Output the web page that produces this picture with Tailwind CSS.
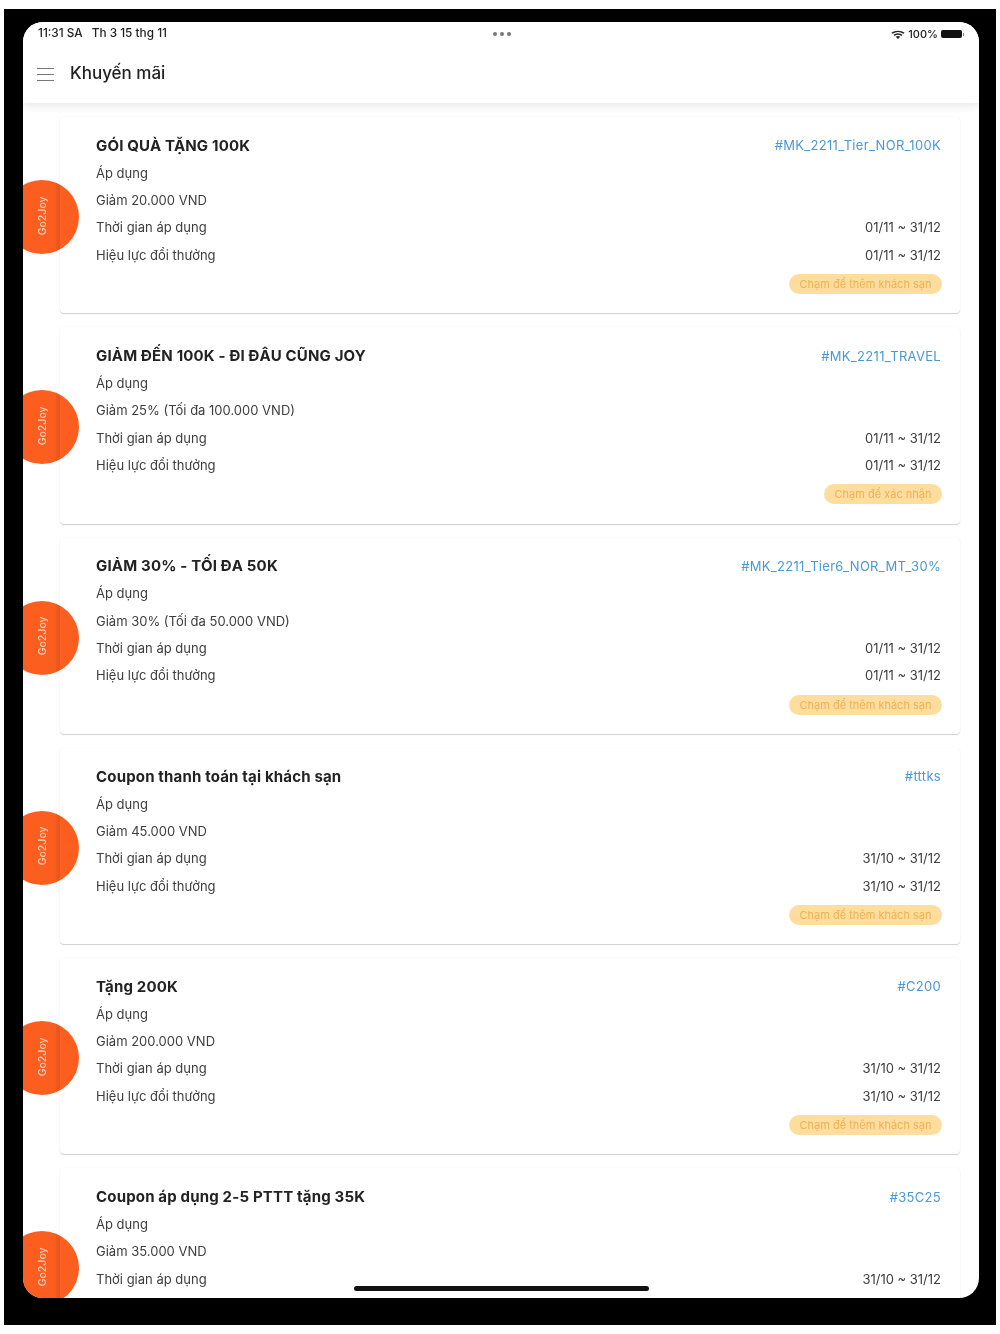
<!DOCTYPE html>
<html lang="vi">
<head>
  <meta charset="UTF-8" />
  <meta name="viewport" content="width=device-width, initial-scale=1.0"/>
  <title>Khuyến mãi</title>
  <script src="https://cdn.jsdelivr.net/npm/@tailwindcss/browser@4"></script>
</head>
<body class="bg-white font-['Inter','Noto_Sans',sans-serif] text-[#333]">
  <div class="w-[1000px] h-[1334px] pt-[9px] pl-1 overflow-hidden blur-[0.4px]">
    <div class="w-[992px] h-[1316px] bg-black pt-[13px] pl-[19px]">
      <div class="relative w-[956px] h-[1276px] bg-white rounded-[20px] overflow-hidden flex flex-col">

        <header class="relative z-20 h-[81px] shrink-0 bg-white shadow-[0_3px_8px_rgba(0,0,0,0.09)]">
          <div class="h-[22px] pt-[2px] px-[15px] flex items-center justify-between text-[11px] font-medium text-[#222]">
            <div class="flex gap-[9px] w-[200px] text-[11.8px]"><span>11:31 SA</span><span>Th 3 15 thg 11</span></div>
            <div class="flex gap-[3px] mr-[-2px]">
              <span class="w-1 h-1 rounded-full bg-[#777]"></span>
              <span class="w-1 h-1 rounded-full bg-[#777]"></span>
              <span class="w-1 h-1 rounded-full bg-[#777]"></span>
            </div>
            <div class="flex items-center justify-end gap-[3px] w-[200px]">
              <svg width="14" height="9" viewBox="0 0 14 11" preserveAspectRatio="none" fill="#222"><path d="M7 11 4.8 8.4a3.4 3.4 0 0 1 4.4 0zM3.7 7.2 2.5 5.8a7 7 0 0 1 9 0l-1.2 1.4a5.2 5.2 0 0 0-6.6 0zM1.5 4.7.3 3.3a10.4 10.4 0 0 1 13.4 0l-1.2 1.4a8.6 8.6 0 0 0-11 0z"/></svg>
              <span>100%</span>
              <span class="w-[21px] h-2 rounded-[2px] bg-[#111]"></span>
              <span class="w-px h-[3px] -ml-[2px] bg-[#888]"></span>
            </div>
          </div>
          <div class="flex items-center gap-4 pl-[14px] h-[59px] pt-[1px]">
            <div class="w-[17px] flex flex-col gap-[5px]">
              <span class="h-px bg-[#777]"></span>
              <span class="h-px bg-[#777]"></span>
              <span class="h-px bg-[#777]"></span>
            </div>
            <h1 class="text-[17px] font-medium text-[#222]">Khuyến mãi</h1>
          </div>
        </header>

        <main class="flex-1 min-h-0 overflow-hidden pt-[14px] flex flex-col gap-[14px]">

          <article class="relative shrink-0 ml-[37px] mr-[19px] h-[196.25px] bg-white rounded shadow-[0_1px_1px_rgba(0,0,0,0.18),0_0_2px_rgba(0,0,0,0.05)] pl-[36px] pr-[19px] pt-[15px] text-[13px] text-[#3d3d3d]">
            <div class="absolute -left-[55px] top-[63px] w-[74px] h-[74px] rounded-full bg-[linear-gradient(90deg,#fb5e1e_68%,#e8591f_70%,#e2571f_74.3%,#fb5e1e_74.3%)] flex items-center justify-center">
              <span class="-rotate-90 mb-[3px] ml-[1px] text-[10.5px] font-medium text-white/70">Go2Joy</span>
            </div>
            <div class="flex justify-between items-center h-[28px]"><h2 class="text-[15px] tracking-[0.17px] font-bold text-[#222]">GÓI QUÀ TẶNG 100K</h2><span class="text-[#4a98d8] tracking-[0.3px]">#MK_2211_Tier_NOR_100K</span></div>
            <div class="h-[27.3px] flex items-center">Áp dụng</div>
            <div class="h-[27.3px] flex items-center">Giảm 20.000 VND</div>
            <div class="h-[27.3px] flex items-center justify-between"><span>Thời gian áp dụng</span><span>01/11 ~ 31/12</span></div>
            <div class="h-[27.3px] flex items-center justify-between"><span>Hiệu lực đổi thưởng</span><span>01/11 ~ 31/12</span></div>
            <div class="flex justify-end mt-[5px] -mr-px"><span class="h-5 px-[10.5px] rounded-full bg-[#fedd9f] text-[11px] leading-5 text-[#eeb152]">Chạm để thêm khách sạn</span></div>
          </article>

          <article class="relative shrink-0 ml-[37px] mr-[19px] h-[196.25px] bg-white rounded shadow-[0_1px_1px_rgba(0,0,0,0.18),0_0_2px_rgba(0,0,0,0.05)] pl-[36px] pr-[19px] pt-[15px] text-[13px] text-[#3d3d3d]">
            <div class="absolute -left-[55px] top-[63px] w-[74px] h-[74px] rounded-full bg-[linear-gradient(90deg,#fb5e1e_68%,#e8591f_70%,#e2571f_74.3%,#fb5e1e_74.3%)] flex items-center justify-center">
              <span class="-rotate-90 mb-[3px] ml-[1px] text-[10.5px] font-medium text-white/70">Go2Joy</span>
            </div>
            <div class="flex justify-between items-center h-[28px]"><h2 class="text-[15px] tracking-[0.17px] font-bold text-[#222]">GIẢM ĐẾN 100K - ĐI ĐÂU CŨNG JOY</h2><span class="text-[#4a98d8] tracking-[0.3px]">#MK_2211_TRAVEL</span></div>
            <div class="h-[27.3px] flex items-center">Áp dụng</div>
            <div class="h-[27.3px] flex items-center">Giảm 25% (Tối đa 100.000 VND)</div>
            <div class="h-[27.3px] flex items-center justify-between"><span>Thời gian áp dụng</span><span>01/11 ~ 31/12</span></div>
            <div class="h-[27.3px] flex items-center justify-between"><span>Hiệu lực đổi thưởng</span><span>01/11 ~ 31/12</span></div>
            <div class="flex justify-end mt-[5px] -mr-px"><span class="h-5 px-[10.5px] rounded-full bg-[#fedd9f] text-[11px] leading-5 text-[#eeb152]">Chạm để xác nhận</span></div>
          </article>

          <article class="relative shrink-0 ml-[37px] mr-[19px] h-[196.25px] bg-white rounded shadow-[0_1px_1px_rgba(0,0,0,0.18),0_0_2px_rgba(0,0,0,0.05)] pl-[36px] pr-[19px] pt-[15px] text-[13px] text-[#3d3d3d]">
            <div class="absolute -left-[55px] top-[63px] w-[74px] h-[74px] rounded-full bg-[linear-gradient(90deg,#fb5e1e_68%,#e8591f_70%,#e2571f_74.3%,#fb5e1e_74.3%)] flex items-center justify-center">
              <span class="-rotate-90 mb-[3px] ml-[1px] text-[10.5px] font-medium text-white/70">Go2Joy</span>
            </div>
            <div class="flex justify-between items-center h-[28px]"><h2 class="text-[15px] tracking-[0.17px] font-bold text-[#222]">GIẢM 30% - TỐI ĐA 50K</h2><span class="text-[#4a98d8] tracking-[0.3px]">#MK_2211_Tier6_NOR_MT_30%</span></div>
            <div class="h-[27.3px] flex items-center">Áp dụng</div>
            <div class="h-[27.3px] flex items-center">Giảm 30% (Tối đa 50.000 VND)</div>
            <div class="h-[27.3px] flex items-center justify-between"><span>Thời gian áp dụng</span><span>01/11 ~ 31/12</span></div>
            <div class="h-[27.3px] flex items-center justify-between"><span>Hiệu lực đổi thưởng</span><span>01/11 ~ 31/12</span></div>
            <div class="flex justify-end mt-[5px] -mr-px"><span class="h-5 px-[10.5px] rounded-full bg-[#fedd9f] text-[11px] leading-5 text-[#eeb152]">Chạm để thêm khách sạn</span></div>
          </article>

          <article class="relative shrink-0 ml-[37px] mr-[19px] h-[196.25px] bg-white rounded shadow-[0_1px_1px_rgba(0,0,0,0.18),0_0_2px_rgba(0,0,0,0.05)] pl-[36px] pr-[19px] pt-[15px] text-[13px] text-[#3d3d3d]">
            <div class="absolute -left-[55px] top-[63px] w-[74px] h-[74px] rounded-full bg-[linear-gradient(90deg,#fb5e1e_68%,#e8591f_70%,#e2571f_74.3%,#fb5e1e_74.3%)] flex items-center justify-center">
              <span class="-rotate-90 mb-[3px] ml-[1px] text-[10.5px] font-medium text-white/70">Go2Joy</span>
            </div>
            <div class="flex justify-between items-center h-[28px]"><h2 class="text-[15px] tracking-[0.17px] font-bold text-[#222]">Coupon thanh toán tại khách sạn</h2><span class="text-[#4a98d8] tracking-[0.3px]">#tttks</span></div>
            <div class="h-[27.3px] flex items-center">Áp dụng</div>
            <div class="h-[27.3px] flex items-center">Giảm 45.000 VND</div>
            <div class="h-[27.3px] flex items-center justify-between"><span>Thời gian áp dụng</span><span>31/10 ~ 31/12</span></div>
            <div class="h-[27.3px] flex items-center justify-between"><span>Hiệu lực đổi thưởng</span><span>31/10 ~ 31/12</span></div>
            <div class="flex justify-end mt-[5px] -mr-px"><span class="h-5 px-[10.5px] rounded-full bg-[#fedd9f] text-[11px] leading-5 text-[#eeb152]">Chạm để thêm khách sạn</span></div>
          </article>

          <article class="relative shrink-0 ml-[37px] mr-[19px] h-[196.25px] bg-white rounded shadow-[0_1px_1px_rgba(0,0,0,0.18),0_0_2px_rgba(0,0,0,0.05)] pl-[36px] pr-[19px] pt-[15px] text-[13px] text-[#3d3d3d]">
            <div class="absolute -left-[55px] top-[63px] w-[74px] h-[74px] rounded-full bg-[linear-gradient(90deg,#fb5e1e_68%,#e8591f_70%,#e2571f_74.3%,#fb5e1e_74.3%)] flex items-center justify-center">
              <span class="-rotate-90 mb-[3px] ml-[1px] text-[10.5px] font-medium text-white/70">Go2Joy</span>
            </div>
            <div class="flex justify-between items-center h-[28px]"><h2 class="text-[15px] tracking-[0.17px] font-bold text-[#222]">Tặng 200K</h2><span class="text-[#4a98d8] tracking-[0.3px]">#C200</span></div>
            <div class="h-[27.3px] flex items-center">Áp dụng</div>
            <div class="h-[27.3px] flex items-center">Giảm 200.000 VND</div>
            <div class="h-[27.3px] flex items-center justify-between"><span>Thời gian áp dụng</span><span>31/10 ~ 31/12</span></div>
            <div class="h-[27.3px] flex items-center justify-between"><span>Hiệu lực đổi thưởng</span><span>31/10 ~ 31/12</span></div>
            <div class="flex justify-end mt-[5px] -mr-px"><span class="h-5 px-[10.5px] rounded-full bg-[#fedd9f] text-[11px] leading-5 text-[#eeb152]">Chạm để thêm khách sạn</span></div>
          </article>

          <article class="relative shrink-0 ml-[37px] mr-[19px] h-[196.25px] bg-white rounded shadow-[0_1px_1px_rgba(0,0,0,0.18),0_0_2px_rgba(0,0,0,0.05)] pl-[36px] pr-[19px] pt-[15px] text-[13px] text-[#3d3d3d]">
            <div class="absolute -left-[55px] top-[63px] w-[74px] h-[74px] rounded-full bg-[linear-gradient(90deg,#fb5e1e_68%,#e8591f_70%,#e2571f_74.3%,#fb5e1e_74.3%)] flex items-center justify-center">
              <span class="-rotate-90 mb-[3px] ml-[1px] text-[10.5px] font-medium text-white/70">Go2Joy</span>
            </div>
            <div class="flex justify-between items-center h-[28px]"><h2 class="text-[15px] tracking-[0.17px] font-bold text-[#222]">Coupon áp dụng 2-5 PTTT tặng 35K</h2><span class="text-[#4a98d8] tracking-[0.3px]">#35C25</span></div>
            <div class="h-[27.3px] flex items-center">Áp dụng</div>
            <div class="h-[27.3px] flex items-center">Giảm 35.000 VND</div>
            <div class="h-[27.3px] flex items-center justify-between"><span>Thời gian áp dụng</span><span>31/10 ~ 31/12</span></div>
          </article>
        </main>

        <div class="absolute z-30 bottom-[7px] left-[331px] w-[295px] h-[5px] rounded-full bg-[#111]"></div>
      </div>
    </div>
  </div>
</body>
</html>
